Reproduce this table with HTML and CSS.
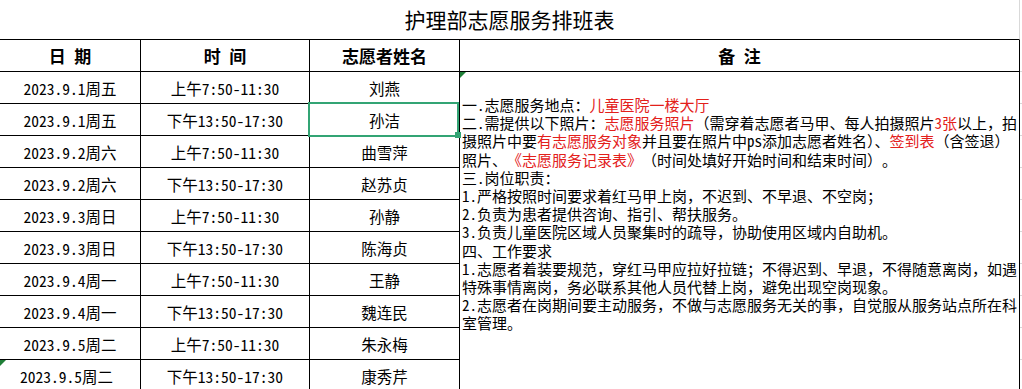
FILE: index.html
```html
<!DOCTYPE html>
<html lang="zh-CN">
<head>
    <meta charset="utf-8" />
    <title>护理部志愿服务排班表</title>
    <link rel="stylesheet" href="styles.css">
</head>
<body>
    <div class="sheet">
        <div class="title">护理部志愿服务排班表</div>
        <table class="roster">
            <colgroup>
                <col class="col-date">
                <col class="col-time">
                <col class="col-name">
                <col class="col-note">
                <col class="col-gap">
            </colgroup>
            <thead>
                <tr>
                    <th>日 期</th>
                    <th>时 间</th>
                    <th>志愿者姓名</th>
                    <th>备 注</th>
                    <td class="gap"></td>
                </tr>
            </thead>
            <tbody>
                <tr>
                    <td>2023.9.1周五</td>
                    <td>上午7:50-11:30</td>
                    <td>刘燕</td>
                    <td class="note" rowspan="10">
                        <p>一.志愿服务地点：<span class="red">儿童医院一楼大厅</span></p>
                        <p>二.需提供以下照片：<span class="red">志愿服务照片</span>（需穿着志愿者马甲、每人拍摄照片<span class="red">3张</span>以上，拍</p>
                        <p>摄照片中要<span class="red">有志愿服务对象</span>并且要在照片中ps添加志愿者姓名）、<span class="red">签到表</span>（含签退）</p>
                        <p class="wide">照片、<span class="red">《志愿服务记录表》</span>（时间处填好开始时间和结束时间）。</p>
                        <p>三.岗位职责：</p>
                        <p>1.严格按照时间要求着红马甲上岗，不迟到、不早退、不空岗；</p>
                        <p>2.负责为患者提供咨询、指引、帮扶服务。</p>
                        <p>3.负责儿童医院区域人员聚集时的疏导，协助使用区域内自助机。</p>
                        <p>四、工作要求</p>
                        <p>1.志愿者着装要规范，穿红马甲应拉好拉链；不得迟到、早退，不得随意离岗，如遇</p>
                        <p>特殊事情离岗，务必联系其他人员代替上岗，避免出现空岗现象。</p>
                        <p>2.志愿者在岗期间要主动服务，不做与志愿服务无关的事，自觉服从服务站点所在科</p>
                        <p>室管理。</p>
                    </td>
                    <td class="gap"></td>
                </tr>
                <tr>
                    <td>2023.9.1周五</td>
                    <td>下午13:50-17:30</td>
                    <td class="selected">孙洁<span class="sel-frame"></span><span class="sel-handle"></span></td>
                    <td class="gap"></td>
                </tr>
                <tr>
                    <td>2023.9.2周六</td>
                    <td>上午7:50-11:30</td>
                    <td>曲雪萍</td>
                    <td class="gap"></td>
                </tr>
                <tr>
                    <td>2023.9.2周六</td>
                    <td>下午13:50-17:30</td>
                    <td>赵苏贞</td>
                    <td class="gap"></td>
                </tr>
                <tr>
                    <td>2023.9.3周日</td>
                    <td>上午7:50-11:30</td>
                    <td>孙静</td>
                    <td class="gap"></td>
                </tr>
                <tr>
                    <td>2023.9.3周日</td>
                    <td>下午13:50-17:30</td>
                    <td>陈海贞</td>
                    <td class="gap"></td>
                </tr>
                <tr>
                    <td>2023.9.4周一</td>
                    <td>上午7:50-11:30</td>
                    <td>王静</td>
                    <td class="gap"></td>
                </tr>
                <tr>
                    <td>2023.9.4周一</td>
                    <td>下午13:50-17:30</td>
                    <td>魏连民</td>
                    <td class="gap"></td>
                </tr>
                <tr>
                    <td>2023.9.5周二</td>
                    <td>上午7:50-11:30</td>
                    <td>朱永梅</td>
                    <td class="gap"></td>
                </tr>
                <tr>
                    <td class="flag shift">2023.9.5周二</td>
                    <td>下午13:50-17:30</td>
                    <td>康秀芹</td>
                    <td class="gap"></td>
                </tr>
            </tbody>
        </table>
    </div>
</body>
</html>
```

FILE: styles.css
```css
body {
    margin: 0;
    background: #fff;
    color: #000;
    font-family: "Noto Sans Mono CJK SC", "Noto Sans CJK SC", sans-serif;
    font-weight: 300;
}

.sheet {
    width: 1022px;
    overflow: hidden;
}

.title {
    width: 1019px;
    height: 39px;
    line-height: 39px;
    border-right: 1px solid #d9d9d9;
    border-bottom: 1px solid #000;
    text-align: center;
    font-size: 21px;
    font-weight: normal;
}

.roster {
    border-collapse: separate;
    border-spacing: 0;
    table-layout: fixed;
    width: 1022px;
}

.col-date { width: 141px; }
.col-time { width: 169px; }
.col-name { width: 150px; }
.col-note { width: 560px; }
.col-gap { width: 2px; }

.roster tr {
    height: 32px;
}

.roster th,
.roster td {
    padding: 0;
    border-right: 1px solid #000;
    border-bottom: 1px solid #000;
    text-align: center;
    vertical-align: middle;
    white-space: nowrap;
}

.roster th {
    font-size: 17px;
    font-weight: bold;
}

.roster td {
    font-size: 15.5px;
}

.roster td.gap {
    border-right: none;
    border-bottom-color: #d9d9d9;
}

.roster td.note {
    position: relative;
    text-align: left;
    vertical-align: top;
    padding: 24px 0 0 2px;
    font-size: 15px;
    line-height: 18.2px;
}

.note p {
    margin: 0;
}

.note p.wide {
    text-spacing-trim: space-all;
}

.red {
    color: #e3201b;
}

/* excel style green corner marks */
.roster td.note::before,
.roster td.flag::before {
    content: "";
    position: absolute;
    left: 0;
    top: 0;
    border-top: 6px solid #1f7f37;
    border-right: 6px solid transparent;
}

.roster td.flag {
    position: relative;
}

.roster td.shift {
    padding-right: 7px;
}

.roster td.selected {
    position: relative;
}

.sel-frame {
    position: absolute;
    left: -2px;
    top: -2px;
    width: 151px;
    height: 35px;
    box-sizing: border-box;
    border: 2px solid #33a474;
}

.sel-handle {
    position: absolute;
    left: 145px;
    top: 28px;
    width: 6px;
    height: 6px;
    background: #33a474;
}
```
